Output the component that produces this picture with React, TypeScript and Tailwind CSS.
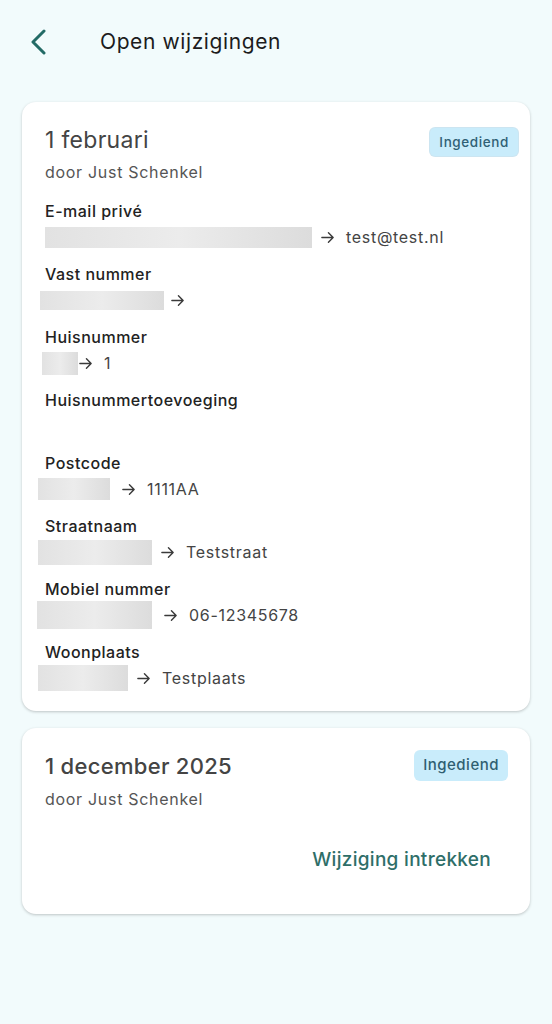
import type { ReactNode } from 'react'

type Change = {
  label: string
  blur?: string
  arrow?: string
  value?: string
}

const changes: Change[] = [
  { label: 'E-mail privé', blur: 'ml-0 w-[267px] h-[21px]', arrow: 'ml-[8px]', value: 'test@test.nl' },
  { label: 'Vast nummer', blur: '-ml-[5px] w-[124px] h-[19px]', arrow: 'ml-[6px]' },
  { label: 'Huisnummer', blur: '-ml-[3px] w-[36px] h-[23px]', arrow: 'ml-0', value: '1' },
  { label: 'Huisnummertoevoeging' },
  { label: 'Postcode', blur: '-ml-[7px] w-[72px] h-[22px]', arrow: 'ml-[11px]', value: '1111AA' },
  { label: 'Straatnaam', blur: '-ml-[7px] w-[114px] h-[25px]', arrow: 'ml-[8px]', value: 'Teststraat' },
  { label: 'Mobiel nummer', blur: '-ml-[8px] w-[115px] h-[28px]', arrow: 'ml-[11px]', value: '06-12345678' },
  { label: 'Woonplaats', blur: '-ml-[7px] w-[90px] h-[26px]', arrow: 'ml-[8px]', value: 'Testplaats' },
]

function Arrow({ className }: { className?: string }) {
  return (
    <svg viewBox="0 0 16 16" className={`h-[15px] w-[15px] shrink-0 ${className ?? ''}`} fill="none" stroke="#3a3a3a" strokeWidth="1.5" strokeLinecap="round" strokeLinejoin="round">
      <path d="M2 8h12M9 3l5 5-5 5" />
    </svg>
  )
}

function Card({ children, className }: { children: ReactNode; className?: string }) {
  return (
    <div className={`rounded-[14px] bg-white shadow-[0_1px_3px_rgba(0,0,0,0.22)] ${className ?? ''}`}>{children}</div>
  )
}

function Field({ c }: { c: Change }) {
  return (
    <div className="mb-[13px]">
      <div className="h-6 text-[16px] font-medium leading-6 tracking-[0.5px] text-[#222]">{c.label}</div>
      <div className="mt-[2px] flex h-6 items-center text-[16px] tracking-[0.7px] text-[#444]">
        {c.blur && <div className={`shrink-0 bg-gradient-to-r from-[#e2e2e2] via-[#ececec] to-[#dcdcdc] ${c.blur}`} />}
        {c.blur && <Arrow className={c.arrow} />}
        {c.value && <span className="ml-[11px]">{c.value}</span>}
      </div>
    </div>
  )
}

export default function App() {
  return (
    <div className="min-h-[1024px] bg-[#f2fbfc] px-[22px] font-['Inter','Roboto',sans-serif]">
      <div className="flex h-[84px] items-center">
        <svg viewBox="0 0 16 26" className="ml-[8px] h-[26px] w-[16px]" fill="none" stroke="#236b66" strokeWidth="3" strokeLinecap="round" strokeLinejoin="round">
          <path d="M14 2 3 13l11 11" />
        </svg>
        <h1 className="ml-[54px] text-[21px] font-normal tracking-[0.6px] text-[#1c1c1c]">Open wijzigingen</h1>
      </div>

      <Card className="mt-[18px] pb-[8px] pl-[23px] pr-[12px] pt-[24px]">
        <div className="flex items-start justify-between">
          <div className="text-[23px] leading-7 tracking-[0.3px] text-[#444]">1 februari</div>
          <span className="mt-[2px] rounded-[5px] bg-[#c9ecfb] px-[9px] py-[4px] text-[13.5px] font-medium tracking-[0.6px] text-[#2f6075] shadow-[0_0_0_1px_rgba(110,180,215,0.35)]">
            Ingediend
          </span>
        </div>
        <div className="mt-[4px] text-[16px] leading-6 tracking-[0.7px] text-[#555]">door Just Schenkel</div>
        <div className="mt-[15px]">
          {changes.map((c) => (
            <Field key={c.label} c={c} />
          ))}
        </div>
      </Card>

      <Card className="mt-[17px] pb-[34px] pl-[23px] pr-[22px] pt-[24px]">
        <div className="flex items-start justify-between">
          <div className="text-[22px] font-medium leading-7 tracking-[0.3px] text-[#444]">1 december 2025</div>
          <span className="-mt-[2px] rounded-[6px] bg-[#c9ecfb] px-[9px] py-[4px] text-[15px] font-medium tracking-[0.5px] text-[#2f5f72]">
            Ingediend
          </span>
        </div>
        <div className="mt-[6px] text-[16px] leading-6 tracking-[0.7px] text-[#555]">door Just Schenkel</div>
        <div className="mt-[29px] flex h-10 items-center justify-end pr-[17px]">
          <button className="text-[19px] font-medium tracking-[0.3px] text-[#2e6e68]">Wijziging intrekken</button>
        </div>
      </Card>
    </div>
  )
}
